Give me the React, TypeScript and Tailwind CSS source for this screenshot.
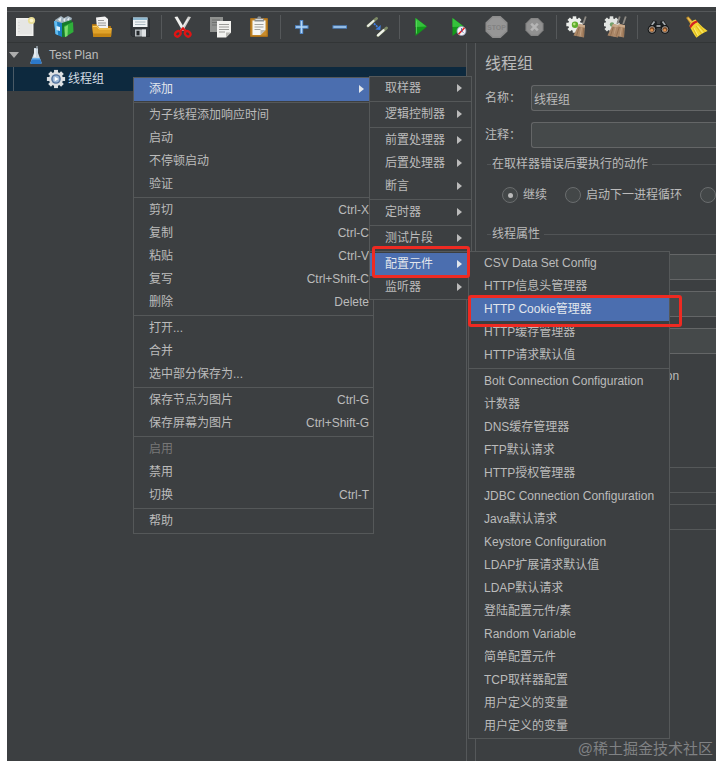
import type { ReactNode } from "react";
import clsx from "clsx";

type Entry = {
  label: string;
  shortcut?: string;
  submenu?: boolean;
  active?: boolean;
  disabled?: boolean;
};

const CONTEXT_MENU: Entry[][] = [
  [{ label: "添加", submenu: true, active: true }],
  [
    { label: "为子线程添加响应时间" },
    { label: "启动" },
    { label: "不停顿启动" },
    { label: "验证" },
  ],
  [
    { label: "剪切", shortcut: "Ctrl-X" },
    { label: "复制", shortcut: "Ctrl-C" },
    { label: "粘贴", shortcut: "Ctrl-V" },
    { label: "复写", shortcut: "Ctrl+Shift-C" },
    { label: "删除", shortcut: "Delete" },
  ],
  [{ label: "打开..." }, { label: "合并" }, { label: "选中部分保存为..." }],
  [
    { label: "保存节点为图片", shortcut: "Ctrl-G" },
    { label: "保存屏幕为图片", shortcut: "Ctrl+Shift-G" },
  ],
  [
    { label: "启用", disabled: true },
    { label: "禁用" },
    { label: "切换", shortcut: "Ctrl-T" },
  ],
  [{ label: "帮助" }],
];

const ADD_MENU: Entry[][] = [
  [{ label: "取样器", submenu: true }],
  [{ label: "逻辑控制器", submenu: true }],
  [
    { label: "前置处理器", submenu: true },
    { label: "后置处理器", submenu: true },
    { label: "断言", submenu: true },
  ],
  [{ label: "定时器", submenu: true }],
  [{ label: "测试片段", submenu: true }],
  [
    { label: "配置元件", submenu: true, active: true },
    { label: "监听器", submenu: true },
  ],
];

const CONFIG_MENU: Entry[][] = [
  [
    { label: "CSV Data Set Config" },
    { label: "HTTP信息头管理器" },
    { label: "HTTP Cookie管理器", active: true },
    { label: "HTTP缓存管理器" },
    { label: "HTTP请求默认值" },
  ],
  [
    { label: "Bolt Connection Configuration" },
    { label: "计数器" },
    { label: "DNS缓存管理器" },
    { label: "FTP默认请求" },
    { label: "HTTP授权管理器" },
    { label: "JDBC Connection Configuration" },
    { label: "Java默认请求" },
    { label: "Keystore Configuration" },
    { label: "LDAP扩展请求默认值" },
    { label: "LDAP默认请求" },
    { label: "登陆配置元件/素" },
    { label: "Random Variable" },
    { label: "简单配置元件" },
    { label: "TCP取样器配置" },
    { label: "用户定义的变量" },
    { label: "用户定义的变量" },
  ],
];

function Icon({ children }: { children: ReactNode }) {
  return (
    <svg viewBox="0 0 24 24" className="h-6 w-6" aria-hidden="true">
      {children}
    </svg>
  );
}

const GEAR_TEETH = [0, 45, 90, 135, 180, 225, 270, 315];

function Gear({ cx, cy, r, fill }: { cx: number; cy: number; r: number; fill: string }) {
  return (
    <g fill={fill}>
      {GEAR_TEETH.map((a) => (
        <rect
          key={a}
          x={cx - r * 0.28}
          y={cy - r * 1.3}
          width={r * 0.56}
          height={r * 0.7}
          transform={`rotate(${a} ${cx} ${cy})`}
        />
      ))}
      <circle cx={cx} cy={cy} r={r} />
    </g>
  );
}

function Brush({ x = 0 }: { x?: number }) {
  return (
    <g transform={`translate(${x} 0)`}>
      <path d="M19.800 1.500 17.200 9" stroke="#8d8a84" strokeWidth="1.800" />
      <path d="m13 9 6 1.300-1 12.200-10.500-2z" fill="#ab8767" />
      <path d="m13 9 6 1.300-.2 2.500-6.900-1.500z" fill="#c9aa8b" />
      <path d="m13.300 12-2.800 8.800M17.700 12.800 17 22" stroke="#866446" strokeWidth=".7" />
      <path d="m15.500 12.500-1.500 9" stroke="#cfb294" strokeWidth=".6" />
    </g>
  );
}

const NewIcon = () => (
  <Icon>
    <path d="M2 3h17.500v18H2z" fill="#f1f1ef" />
    <path d="M3.500 4.500h14.500v15H3.500z" fill="#e6e6e4" />
    <path d="M5 7v10" stroke="#cfcfcd" strokeDasharray="1 2" />
    <circle cx="17.500" cy="5.500" r="3.600" fill="#eadf98" />
    <circle cx="17.500" cy="5.500" r="1.800" fill="#fbf6cf" />
  </Icon>
);

const TemplatesIcon = () => (
  <Icon>
    <path d="M3 5 9 1l3 2 4-2 4 2-2 6H3z" fill="#9fb1bd" />
    <path d="M6 4.500 9.500 2 8.500 7M11 5l2.500-2.500L13 7M15 4.500 17.500 2 17 6" fill="#e4ebef" />
    <path d="M2 6 10 8v14l-6.500-3z" fill="#1c7fc4" />
    <path d="m2 6 3 .8 1.200 13.500-2.700-1.300z" fill="#63bdf0" />
    <path d="m10 8 9-3 1 2-6 15h-4z" fill="#167a2c" />
    <path d="m12 11 9-4 .5 10L13 22z" fill="#2faf3a" />
    <path d="m12.500 12 3.500-2-.5 11-2.500 1z" fill="#7fdc6f" />
    <path d="m4.500 11 3.500 1v4l-3.500-1z" fill="#d9effb" />
  </Icon>
);

const OpenIcon = () => (
  <Icon>
    <path d="M2 9h6l2 2h11v9H3z" fill="#a86e12" />
    <path d="m6 2.500 9-1L18 4v9H7z" fill="#f2f2f2" />
    <path d="M8 5.500h6M8 8h8M8 10.300h8" stroke="#8c8c8c" strokeWidth=".9" />
    <path d="M2 10.500h5.500L9.500 13H22l-1 9H3.500z" fill="#e0a32a" />
    <path d="M3 11.500h4l2 2.500h12" stroke="#f6cf69" fill="none" />
    <path d="M3 18.500h18.300L21 22H3.500z" fill="#c58513" />
  </Icon>
);

const SaveIcon = () => (
  <Icon>
    <path d="M3 3h17.500L21.500 4v17.500h-17L3 20z" fill="#33373b" stroke="#23262a" strokeWidth=".6" />
    <path d="M5 2.500h14.500V12H5z" fill="#f0f3f5" />
    <path d="M5 2.500h14.500V5H5z" fill="#8db7cf" />
    <path d="M7 7h10.500M7 9.500h10.500" stroke="#a9b7bf" />
    <path d="M7 14.500h11v7H7z" fill="#b7bcc0" />
    <path d="M8.500 15.800h3v4.500h-3z" fill="#25292c" />
    <path d="M14 14.500h4v7h-4z" fill="#dfe2e4" />
  </Icon>
);

const CutIcon = () => (
  <Icon>
    <path d="m3.500 2 3-.5L14.500 15l-3 1z" fill="#f0f0ee" />
    <path d="m20 2-3-.5L9 15l3 1z" fill="#cfcfcd" />
    <path d="m17 4-6 9.500" stroke="#fff" strokeWidth=".8" />
    <g fill="none" stroke="#e01414" strokeWidth="2.300">
      <ellipse cx="6.800" cy="18.800" rx="2.400" ry="3" transform="rotate(45 6.800 18.800)" />
      <ellipse cx="16.700" cy="18.800" rx="2.400" ry="3" transform="rotate(-45 16.700 18.800)" />
      <path d="m9 16.500 3-3 3 3" />
    </g>
  </Icon>
);

const CopyIcon = () => (
  <Icon>
    <path d="M1 2h13v15H1z" fill="#8f918f" />
    <path d="M3 5h8M3 7.500h8M3 10h5" stroke="#6f716f" />
    <path d="M8 6h14v11.500L17 22.500H8z" fill="#f3f3f0" />
    <path d="M10 9.500h10M10 12h10M10 14.500h10M10 17h6" stroke="#9b9b98" />
    <path d="M22 17.500h-5v5z" fill="#b9b9b4" />
  </Icon>
);

const PasteIcon = () => (
  <Icon>
    <rect x="3" y="3" width="18" height="19" rx="1" fill="#a96f1a" />
    <rect x="4.300" y="4.300" width="15.400" height="16.400" fill="#c98c2c" />
    <path d="M5.500 5.500h13V15l-5 5h-8z" fill="#f5f5f3" />
    <path d="M7.500 9.500h9M7.500 12h9M7.500 14.500h6" stroke="#a2a29e" />
    <path d="M18.500 15h-5v5z" fill="#bdbdb7" />
    <path d="M7.500 6.500V3.500h2.500L11 1.500h2.500l1 2H17v3z" fill="#8a8f93" />
    <path d="M8.500 4.500H16" stroke="#d4d8da" />
  </Icon>
);

const PlusIcon = () => (
  <Icon>
    <path d="M11.500 5v14M5 12h13.500" stroke="#4f86c8" strokeWidth="3.400" />
    <path d="M11.500 6v12M6 12h11.500" stroke="#b4d8f7" strokeWidth="1.500" />
  </Icon>
);

const MinusIcon = () => (
  <Icon>
    <path d="M4.500 12h14.500" stroke="#4f86c8" strokeWidth="3.400" />
    <path d="M5.500 12h12.500" stroke="#a9cdee" strokeWidth="1.500" />
  </Icon>
);

const ToggleIcon = () => (
  <Icon>
    <g strokeLinecap="round">
      <path d="M2 11 10.500 3.500" stroke="#7d8a66" strokeWidth="3" />
      <path d="M2 10.800 7.500 6" stroke="#e9ece2" strokeWidth="2.200" />
      <path d="M12 20.500 20.500 13" stroke="#7d8a66" strokeWidth="3" />
      <path d="m12 20.300 5.500-5" stroke="#f0f2ea" strokeWidth="2.400" />
    </g>
    <path d="m8 8.500 4 4" stroke="#3f7fe0" strokeWidth="1.800" strokeDasharray="2 .8" />
    <path d="m14.800 10-.5 5-5-.5z" fill="#3f7fe0" />
  </Icon>
);

const StartIcon = () => (
  <Icon>
    <path d="M6.500 3v18L18 11.500z" fill="#129a1b" />
    <path d="M6.500 3v9l11-.5z" fill="#35c13c" />
    <path d="M7.500 5.500v13" stroke="#5fdc62" strokeWidth=".8" />
  </Icon>
);

const StartNoPauseIcon = () => (
  <Icon>
    <path d="M5.500 3v18L17 11.500z" fill="#129a1b" />
    <path d="M5.500 3v9l11-.5z" fill="#35c13c" />
    <circle cx="14.500" cy="16" r="4.500" fill="#f3f3f6" stroke="#8f96b5" strokeWidth=".8" />
    <path d="m11.500 19.300 6-6.600" stroke="#e02525" strokeWidth="1.600" />
    <path d="M14.500 13v3l2 1.500" stroke="#3a58a8" strokeWidth=".8" fill="none" />
  </Icon>
);

const StopIcon = () => (
  <Icon>
    <path d="M7.500 1h8L22.500 7.500v9L15.500 23h-8L.5 16.500v-9z" fill="#8d8d8d" />
    <path d="M8 2.500h7L21 8.500v7L15 21.500H8L2 15.500v-7z" fill="#969696" />
    <text
      x="11.500"
      y="14.500"
      textAnchor="middle"
      fontSize="7"
      fontWeight="700"
      fontFamily="Liberation Sans, sans-serif"
      fill="#828282"
    >
      STOP
    </text>
  </Icon>
);

const ShutdownIcon = () => (
  <Icon>
    <path d="M8 3h7l5.500 5.500v7L15 21H8l-5.500-5.500v-7z" fill="#858585" />
    <path d="M8.500 4.300h6L19.200 9v6l-4.700 4.700h-6L3.800 15V9z" fill="#919191" />
    <path d="m8.200 8.700 6.600 6.600M14.800 8.700l-6.600 6.600" stroke="#b5b5b5" strokeWidth="2.600" />
  </Icon>
);

const ClearIcon = () => (
  <Icon>
    <Gear cx={8.500} cy={9.500} r={6.300} fill="#eceeeb" />
    <circle cx="9" cy="9.800" r="3.200" fill="#5fae2c" />
    <circle cx="8.300" cy="9.100" r="1.300" fill="#b5e27c" />
    <Brush />
  </Icon>
);

const ClearAllIcon = () => (
  <Icon>
    <Gear cx={7.500} cy={9.500} r={6.300} fill="#e2e5e2" />
    <circle cx="8" cy="9.500" r="2.200" fill="#74a06a" />
    <Brush x={-4} />
    <Brush x={2} />
  </Icon>
);

const SearchIcon = () => (
  <Icon>
    <path d="m3 10 3-4.500 3.500.5.500 3h3l.5-3 3.500-.5 3 4.500 2 5-5 2-3-4h-4l-3 4-5-2z" fill="#1d2022" />
    <path d="m4.800 10 2.700-3.500M18.200 10l-2.700-3.500" stroke="#a3a9ad" strokeWidth="1.800" />
    <path d="M9.500 11h4" stroke="#b5babd" strokeWidth="1.600" />
    <circle cx="5" cy="14.500" r="4.300" fill="#141516" />
    <circle cx="18" cy="14.500" r="4.300" fill="#141516" />
    <circle cx="5" cy="14.500" r="2.900" fill="#7b4a26" stroke="#a2a8ab" strokeWidth=".8" />
    <circle cx="18" cy="14.500" r="2.900" fill="#7b4a26" stroke="#a2a8ab" strokeWidth=".8" />
    <circle cx="4.700" cy="15.200" r="1.400" fill="#dc9252" />
    <circle cx="17.700" cy="15.200" r="1.400" fill="#dc9252" />
  </Icon>
);

const ResetSearchIcon = () => (
  <Icon>
    <path d="M1.500 3.500Q1 1.500 3.500 1.500L8 6.500 5 8.500z" fill="#b98a26" />
    <path d="M2.500 3.500Q3 2 4 3l3 3.500-1.500 1z" fill="#efc25a" />
    <path d="M4.500 11Q5 6 10.500 4.500L12.500 7Q18 13 22.700 16 18 17.500 11.500 22.700 9 20 5.500 13z" fill="#f3d633" />
    <path d="m11 11 5.500 7.800M13.500 9.500l6 7.300M8 13l4 8.500" stroke="#d3a816" strokeWidth=".7" />
    <path d="m9 13 4 7.500M12.500 10.800l5.300 7" stroke="#fbf08f" strokeWidth=".8" />
    <path d="M4.500 11.500Q6 7 11.500 5.500l1.200 1.800Q8 9 5.700 13.500z" fill="#d42222" />
  </Icon>
);

const TOOLBAR: { label: string; icon: () => ReactNode }[][] = [
  [
    { label: "新建", icon: NewIcon },
    { label: "模板", icon: TemplatesIcon },
    { label: "打开", icon: OpenIcon },
    { label: "保存", icon: SaveIcon },
  ],
  [
    { label: "剪切", icon: CutIcon },
    { label: "复制", icon: CopyIcon },
    { label: "粘贴", icon: PasteIcon },
  ],
  [
    { label: "展开", icon: PlusIcon },
    { label: "收起", icon: MinusIcon },
    { label: "切换", icon: ToggleIcon },
  ],
  [
    { label: "启动", icon: StartIcon },
    { label: "不停顿启动", icon: StartNoPauseIcon },
    { label: "停止", icon: StopIcon },
    { label: "关闭", icon: ShutdownIcon },
  ],
  [
    { label: "清除", icon: ClearIcon },
    { label: "清除全部", icon: ClearAllIcon },
  ],
  [
    { label: "查找", icon: SearchIcon },
    { label: "重置搜索", icon: ResetSearchIcon },
  ],
];

function Toolbar() {
  return (
    <div
      role="toolbar"
      className="mt-1 flex h-8 items-center overflow-hidden border-y border-t-[#55585a] border-b-[#323536]"
    >
      {TOOLBAR.map((group, i) => (
        <div key={i} className="flex shrink-0 items-center">
          {i > 0 && <span className="mx-0.5 h-6 w-px bg-[#55585a]" />}
          {group.map(({ label, icon: Glyph }) => (
            <button
              key={label}
              type="button"
              aria-label={label}
              className="grid h-7 w-[38px] place-items-center"
            >
              <Glyph />
            </button>
          ))}
        </div>
      ))}
    </div>
  );
}

function Tree() {
  return (
    <div className="w-[460px] shrink-0 border-r border-[#55585a]">
      <div className="flex h-6 items-center">
        <svg viewBox="0 0 10 6" className="ml-0.5 h-1.5 w-2.5" aria-hidden="true">
          <path d="M0 0h10L5 6z" fill="#adadad" />
        </svg>
        <svg viewBox="0 0 14 20" className="ml-2.5 h-5 w-3.5" aria-hidden="true">
          <path d="M5 3h4v5l3.500 9.500q.5 1.500-1.500 1.500H3q-2 0-1.500-1.500L5 8z" fill="#cdd9e3" />
          <path d="M3.200 13h7.600l1.700 4.500q.5 1.500-1.500 1.500H3q-2 0-1.500-1.500z" fill="#2c78c9" />
          <path d="M3.200 13h7.600l.5 1.600H2.700z" fill="#6db1ec" />
          <path d="M6 4v8" stroke="#fff" />
          <path d="M8 1v3" stroke="#9aa6ae" strokeWidth="1.500" />
        </svg>
        <span className="ml-1.5">Test Plan</span>
      </div>
      <div className="flex h-6 items-center bg-[#0d293e]">
        <span className="ml-1.5 h-6 w-px bg-[#4a5a66]" />
        <svg viewBox="0 0 20 20" className="ml-8 h-5 w-5" aria-hidden="true">
          <Gear cx={10} cy={10} r={7} fill="#dcdfe2" />
          <circle cx="10" cy="10" r="4.800" fill="#4f6f9a" />
          <circle cx="10" cy="10" r="3.400" fill="#9cb7d6" />
          <path d="m8.700 7.800 4 2.200-4 2.200z" fill="#fff" />
        </svg>
        <span className="ml-0.5 text-[#d2dbe2]">线程组</span>
      </div>
    </div>
  );
}

const FIELD =
  "h-[26px] min-w-0 flex-1 rounded-l-[3px] border border-r-0 border-[#646667] bg-[#45494a] px-0.5 text-[#bbbbbb] outline-none";

function Field({ id, label, value }: { id: string; label: string; value: string }) {
  return (
    <div className="flex items-center">
      <label htmlFor={id} className="w-[46px] shrink-0">
        {label}
      </label>
      <input id={id} type="text" defaultValue={value} className={FIELD} />
    </div>
  );
}

function GroupTitle({ children }: { children: ReactNode }) {
  return (
    <legend className="flex w-full items-center whitespace-nowrap leading-4">
      <span className="ml-0.5 mr-px h-px w-1 bg-[#515456]" />
      {children}
      <span className="ml-1 h-px flex-1 bg-[#515456]" />
    </legend>
  );
}

const RADIO =
  "grid h-4 w-4 shrink-0 appearance-none place-items-center rounded-full border border-[#6a6d6e] bg-[#434748] before:h-[5px] before:w-[5px] before:rounded-full checked:before:bg-[#bbbbbb]";

function ThreadGroup() {
  return (
    <form className="ml-2 min-w-0 flex-1 overflow-hidden border-l border-[#55585a] pl-[9px] pt-[9px]">
      <h1 className="text-base leading-6">线程组</h1>
      <div className="mt-[9px] flex flex-col gap-[11px]">
        <Field id="name" label="名称：" value="线程组" />
        <Field id="comments" label="注释：" value="" />
      </div>

      <fieldset className="mt-2 min-w-0">
        <GroupTitle>在取样器错误后要执行的动作</GroupTitle>
        <div className="mt-[15px] flex gap-[18px] whitespace-nowrap pl-[17px] leading-4">
          <label className="flex shrink-0 items-center gap-[5px]">
            <input type="radio" name="on-error" defaultChecked className={RADIO} />
            继续
          </label>
          <label className="flex shrink-0 items-center gap-[5px]">
            <input type="radio" name="on-error" className={RADIO} />
            启动下一进程循环
          </label>
          <input type="radio" name="on-error" aria-label="停止线程" className={RADIO} />
        </div>
      </fieldset>

      <fieldset className="mt-[23px] min-w-0">
        <GroupTitle>线程属性</GroupTitle>
        <div className="mt-3 flex flex-col gap-[11px] pl-20">
          <input type="text" aria-label="线程数" className={clsx(FIELD, "flex-none")} />
          <input type="text" aria-label="Ramp-Up时间" className={clsx(FIELD, "flex-none")} />
          <input type="text" aria-label="循环次数" className={clsx(FIELD, "flex-none")} />
        </div>
        <label className="mt-3.5 flex items-center gap-1 whitespace-nowrap pl-[26px] leading-4">
          <input type="checkbox" className="h-3.5 w-3.5 appearance-none border border-[#646667]" />
          Same user on each iteration
        </label>
        {/* disabled scheduler fields */}
        <div className="mt-[83px] flex flex-col gap-[11px] pl-20">
          <input
            type="text"
            disabled
            aria-label="持续时间"
            className="h-[26px] border border-r-0 border-[#555859]"
          />
          <input
            type="text"
            disabled
            aria-label="启动延迟"
            className="h-[26px] border border-r-0 border-[#555859]"
          />
        </div>
      </fieldset>
    </form>
  );
}

function Menu({ groups, className }: { groups: Entry[][]; className: string }) {
  return (
    <div
      role="menu"
      className={clsx("absolute border border-[#555859] bg-[#3c3f41]", className)}
    >
      {groups.map((group, i) => (
        <div key={i}>
          {i > 0 && <div role="separator" className="my-px h-px bg-[#555859]" />}
          {group.map((entry, j) => (
            <button
              key={j}
              type="button"
              role="menuitem"
              disabled={entry.disabled}
              className={clsx(
                "flex h-[23px] w-full items-center justify-between whitespace-nowrap pb-0.5 pl-[15px] text-left",
                entry.submenu ? "pr-[9px]" : "pr-1",
                entry.active && "bg-[#4b6eaf] text-[#e2e6ec]",
                entry.disabled && "text-[#777777]",
              )}
            >
              {entry.label}
              {entry.shortcut && <span>{entry.shortcut}</span>}
              {entry.submenu && (
                <svg viewBox="0 0 5 8" className="h-2 w-[5px]" aria-hidden="true">
                  <path d="M0 0v8l5-4z" fill="currentColor" />
                </svg>
              )}
            </button>
          ))}
        </div>
      ))}
    </div>
  );
}

export default function App() {
  return (
    <div className="flex min-h-screen bg-white pb-[3px] pl-[7px] pr-[3px] pt-[7px] font-['Liberation_Sans','Noto_Sans_CJK_SC',sans-serif] text-xs text-[#bbbbbb]">
      <div className="relative flex min-w-0 flex-1 flex-col bg-[#3c3f41]">
        <Toolbar />
        <div className="flex flex-1">
          <Tree />
          <ThreadGroup />
        </div>

        <Menu groups={CONTEXT_MENU} className="left-[126px] top-[70px] w-[241px]" />
        <Menu groups={ADD_MENU} className="left-[362px] top-[69px] w-[103px]" />
        <Menu groups={CONFIG_MENU} className="left-[461px] top-[244px] w-[202px]" />

        {/* red callouts around the two chosen entries */}
        <span className="pointer-events-none absolute left-[365px] top-[239px] h-8 w-[98px] rounded-[3px] border-3 border-[#ee2a22]" />
        <span className="pointer-events-none absolute left-[461px] top-[288px] h-8 w-[214px] rounded-[3px] border-3 border-[#ee2a22]" />

        <span className="absolute bottom-0 right-[3px] text-[15px] leading-6 text-[#808284]">
          @稀土掘金技术社区
        </span>
      </div>
    </div>
  );
}
